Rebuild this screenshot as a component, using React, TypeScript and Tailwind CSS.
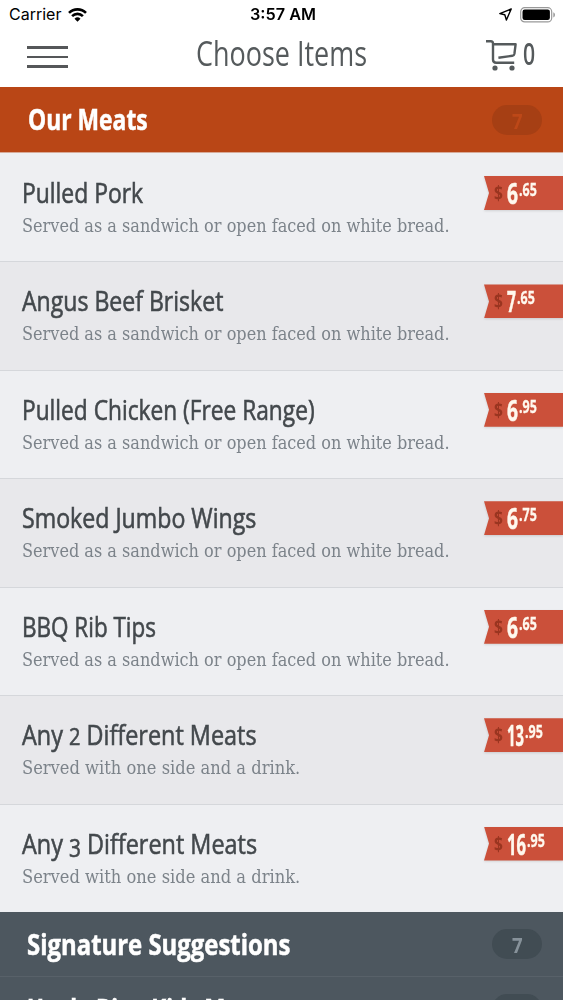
import { useLayoutEffect, useRef, useState } from "react";
import type { ReactNode } from "react";

type Item = {
    name: ReactNode;
    nameWidth: number;
    note: string;
    noteWidth: number;
    dollars: string;
    dollarsWidth: number;
    cents: string;
};

const SANDWICH = "Served as a sandwich or open faced on white bread.";
const COMBO = "Served with one side and a drink.";

const items: Item[] = [
    { name: "Pulled Pork", nameWidth: 121, note: SANDWICH, noteWidth: 428, dollars: "6", dollarsWidth: 11, cents: ".65" },
    { name: "Angus Beef Brisket", nameWidth: 201, note: SANDWICH, noteWidth: 428, dollars: "7", dollarsWidth: 9, cents: ".65" },
    { name: "Pulled Chicken (Free Range)", nameWidth: 293, note: SANDWICH, noteWidth: 428, dollars: "6", dollarsWidth: 11, cents: ".95" },
    { name: "Smoked Jumbo Wings", nameWidth: 234, note: SANDWICH, noteWidth: 428, dollars: "6", dollarsWidth: 11, cents: ".75" },
    { name: "BBQ Rib Tips", nameWidth: 134, note: SANDWICH, noteWidth: 428, dollars: "6", dollarsWidth: 11, cents: ".65" },
    { name: <>Any <span className="text-[24px] leading-none">2</span> Different Meats</>, nameWidth: 235, note: COMBO, noteWidth: 278, dollars: "13", dollarsWidth: 17, cents: ".95" },
    { name: <>Any <span className="align-[-3px] text-[25px] leading-none">3</span> Different Meats</>, nameWidth: 235, note: COMBO, noteWidth: 278, dollars: "16", dollarsWidth: 19, cents: ".95" },
];

// Squeezes a line of text to the given width
function Condensed({ width, className, children }: { width: number; className?: string; children: ReactNode }) {
    const ref = useRef<HTMLSpanElement>(null);
    const [scale, setScale] = useState(1);

    useLayoutEffect(() => {
        if (ref.current) setScale(width / ref.current.offsetWidth);
    }, [width]);

    return (
        <span className={`block shrink-0 whitespace-nowrap ${className ?? ""}`} style={{ width }}>
            <span ref={ref} className="inline-block origin-left" style={{ transform: `scaleX(${scale})` }}>
                {children}
            </span>
        </span>
    );
}

function StatusBar() {
    return (
        <div className="grid h-[29px] grid-cols-3 items-center pr-[7px] pl-[9px] font-['Inter'] text-black">
            <div className="flex items-center gap-[7px]">
                <Condensed width={52} className="text-[16px] leading-[29px]">Carrier</Condensed>
                <svg width="19" height="14" viewBox="0 0 19 14" fill="none" stroke="currentColor" strokeWidth="2.6">
                    <path d="M1 4.9a12.1 12.1 0 0 1 17 0" />
                    <path d="M4.1 8.1a7.7 7.7 0 0 1 10.8 0" />
                    <path d="M9.5 13.8 6.5 10.8a4.3 4.3 0 0 1 6 0Z" fill="currentColor" stroke="none" />
                </svg>
            </div>
            <div className="flex justify-center pl-[2px]">
                <Condensed width={66} className="text-[16px] leading-[29px] font-semibold">3:57 AM</Condensed>
            </div>
            <div className="flex items-center justify-end">
                <svg width="13" height="13" viewBox="0 0 13 13" fill="none" stroke="currentColor" strokeWidth="1.4" strokeLinejoin="round" className="mr-[8px]">
                    <path d="M12.2 1 .8 5.6l5 1.2 1.6 5.2Z" />
                </svg>
                <svg width="36" height="16" viewBox="0 0 36 16">
                    <rect x=".7" y=".7" width="31" height="14.2" rx="4" fill="none" stroke="#999" strokeWidth="1.2" />
                    <rect x="2.5" y="2.6" width="27.4" height="10.4" rx="2.2" />
                    <path d="M33.3 5.2c2.2.8 2.2 4.4 0 5.2Z" fill="#999" />
                </svg>
            </div>
        </div>
    );
}

function NavBar() {
    return (
        <div className="flex h-[58px] items-start justify-between pr-[28px] pl-[27px] text-[#555a5c]">
            <div className="mt-[17px] flex w-[41px] flex-col gap-[7px]">
                <div className="h-[2.5px] bg-[#555759]" />
                <div className="h-[2.5px] bg-[#555759]" />
                <div className="h-[2.5px] bg-[#555759]" />
            </div>
            <Condensed width={171} className="ml-[10px] text-[35px] leading-[47px] font-normal">Choose Items</Condensed>
            <div className="flex items-start gap-[6px]">
                <svg width="32" height="32" viewBox="0 0 32 32" fill="none" stroke="currentColor" strokeWidth="2.4" strokeLinejoin="round" className="mt-[10px]">
                    <path d="M1 2.2h4.8q2.2 0 2.2 2.4v16q0 3.2 3.2 3.2h18" />
                    <path d="M8 5.3h22.6l-1.2 9.6q-.3 1.7-2 1.9l-14 1.9" />
                    <circle cx="10" cy="29" r="2.6" fill="currentColor" stroke="none" />
                    <circle cx="27" cy="29" r="2.6" fill="currentColor" stroke="none" />
                </svg>
                <Condensed width={12} className="text-[30px] leading-[49px] font-semibold">0</Condensed>
            </div>
        </div>
    );
}

function Count({ active }: { active?: boolean }) {
    return (
        <div className={`flex h-[30px] w-[50px] items-center justify-center rounded-full ${active ? "bg-[#a63f14] text-[#bd4818]" : "bg-[#414c53] text-[#87929a]"}`}>
            <Condensed width={11} className="text-[22px] leading-[28px] font-bold">7</Condensed>
        </div>
    );
}

function Price({ item }: { item: Item }) {
    return (
        <div className="mt-[22px] h-[34px] w-[79px] shrink-0 drop-shadow-[0_1px_1px_rgba(0,0,0,0.12)]">
            <div className="flex h-full items-start bg-[#cb503a] pl-[10px] text-[#fff8ee] [clip-path:polygon(0_0,100%_0,100%_100%,0_100%,5px_50%)]">
                <Condensed width={9} className="text-[19px] leading-[34px] font-bold text-[#9a3520]">$</Condensed>
                <Condensed width={item.dollarsWidth} className="ml-[4px] text-[28px] leading-[34px] font-bold [-webkit-text-stroke:0.5px]">{item.dollars}</Condensed>
                <Condensed width={18} className="ml-px text-[18px] leading-[26px] font-bold [-webkit-text-stroke:0.3px]">{item.cents}</Condensed>
            </div>
        </div>
    );
}

export default function App() {
    return (
        <div className="h-[1000px] w-[563px] overflow-hidden bg-white font-['Open_Sans',sans-serif]">
            <StatusBar />
            <NavBar />

            <div className="flex h-[66px] items-center justify-between border-b border-[#d7aa98] bg-[#b94616] pr-[21px] pl-[28px] text-white">
                <Condensed width={120} className="text-[28px] leading-[65px] font-bold [-webkit-text-stroke:0.5px]">Our Meats</Condensed>
                <Count active />
            </div>

            <div className="grid h-[759px] grid-rows-7">
                {items.map((item, i) => (
                    <div key={i} className="flex justify-between border-t border-[#d5d7db] bg-[#eeeff2] pl-[22px] first:border-[#eeeff2] even:bg-[#e8e8eb]">
                        <div>
                            <Condensed width={item.nameWidth} className="mt-[18px] h-[41px] text-[28px] leading-[40px] text-[#43484c] [-webkit-text-stroke:0.6px]">{item.name}</Condensed>
                            <Condensed width={item.noteWidth} className="h-[26px] font-['DejaVu_Serif_Condensed','DejaVu_Serif',serif] text-[18px] leading-[26px] text-[#7c838a]">{item.note}</Condensed>
                        </div>
                        <Price item={item} />
                    </div>
                ))}
            </div>

            <div className="flex h-[65px] items-center justify-between border-b border-[#586169] bg-[#4d575f] pr-[21px] pl-[27px] text-white">
                <Condensed width={263} className="text-[28px] leading-[64px] font-bold [-webkit-text-stroke:0.5px]">Signature Suggestions</Condensed>
                <Count />
            </div>
            <div className="flex h-[64px] items-center justify-between bg-[#4d575f] pr-[21px] pl-[27px] text-white">
                <Condensed width={241} className="text-[28px] leading-[62px] font-bold [-webkit-text-stroke:0.5px]">Uncle Bing Kids Menu</Condensed>
                <Count />
            </div>
        </div>
    );
}
